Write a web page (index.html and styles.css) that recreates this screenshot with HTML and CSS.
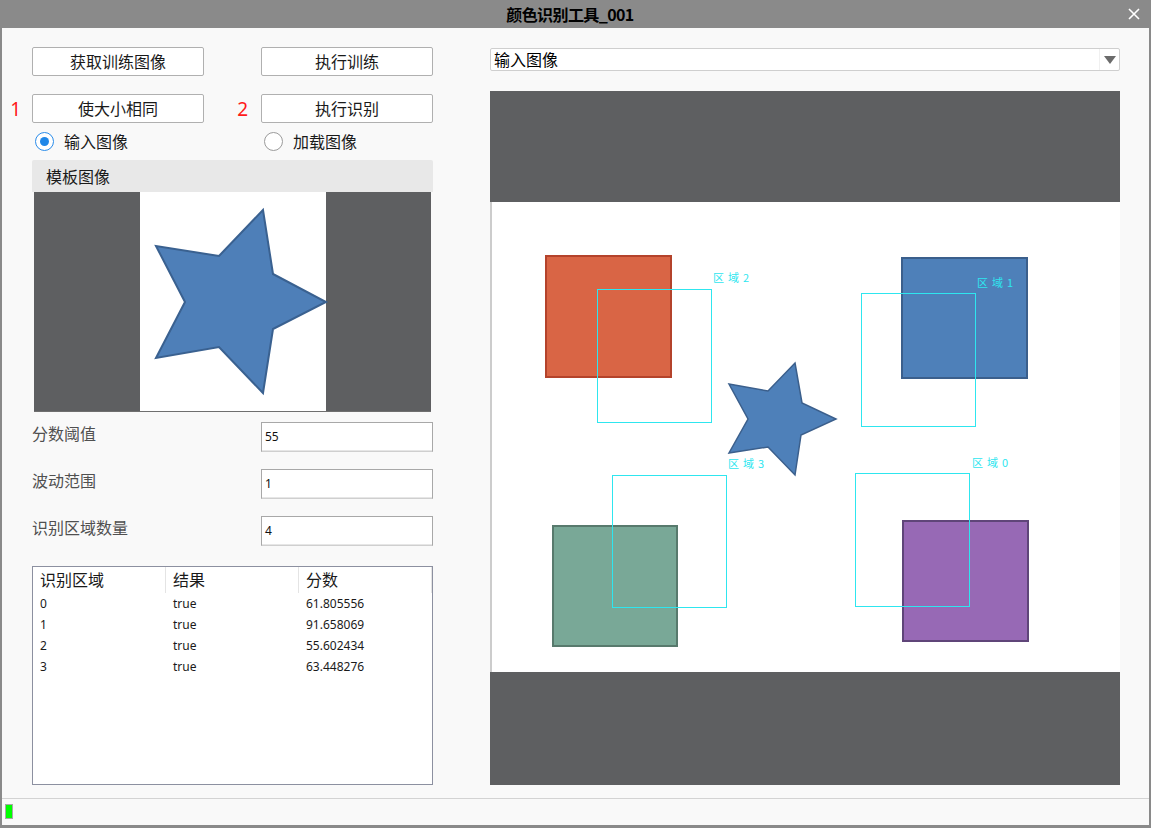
FILE: index.html
```html
<!DOCTYPE html>
<html lang="zh-CN">
<head>
<meta charset="utf-8">
<title>颜色识别工具_001</title>
<link rel="stylesheet" href="styles.css">
</head>
<body>
<div class="window">
  <div class="titlebar">
    <div class="title-spacer"></div>
    <div class="title">颜色识别工具_001</div>
    <div class="title-spacer close-wrap">
      <svg class="close" width="12" height="12" viewBox="0 0 12 12"><path d="M1 1L11 11M11 1L1 11" stroke="#fff" stroke-width="1.6"/></svg>
    </div>
  </div>
  <div class="client">
    <div class="main">
      <div class="left">
        <div class="btn-grid">
          <div></div>
          <button class="btn">获取训练图像</button>
          <div></div>
          <button class="btn">执行训练</button>
          <div class="num num1">1</div>
          <button class="btn">使大小相同</button>
          <div class="num num2">2</div>
          <button class="btn">执行识别</button>
        </div>
        <div class="radio-row">
          <div></div>
          <label class="radio"><span class="circle on"></span><span>输入图像</span></label>
          <div></div>
          <label class="radio"><span class="circle"></span><span>加载图像</span></label>
        </div>
        <div class="template">
          <div class="template-head">模板图像</div>
          <svg class="template-img" width="397" height="220" viewBox="0 0 397 220">
            <rect x="0" y="0" width="397" height="220" fill="#5e5f61"/>
            <rect x="106" y="0" width="186" height="219" fill="#ffffff"/>
            <polygon points="229,18 239,82 292,110 239,137 229,201 185,155 122,166 151,110 122,54 185,64" fill="#4e7fb8" stroke="#3a6190" stroke-width="2" stroke-linejoin="miter"/>
            <rect x="0" y="219" width="397" height="1" fill="#6f6f6f"/>
          </svg>
        </div>
        <div class="form">
          <div></div><div class="flabel">分数阈值</div><div class="input">55</div>
          <div></div><div class="flabel">波动范围</div><div class="input">1</div>
          <div></div><div class="flabel">识别区域数量</div><div class="input">4</div>
        </div>
        <div class="table">
          <div class="thead">
            <div class="th">识别区域</div>
            <div class="th">结果</div>
            <div class="th">分数</div>
          </div>
          <div class="tr"><div>0</div><div>true</div><div>61.805556</div></div>
          <div class="tr"><div>1</div><div>true</div><div>91.658069</div></div>
          <div class="tr"><div>2</div><div>true</div><div>55.602434</div></div>
          <div class="tr"><div>3</div><div>true</div><div>63.448276</div></div>
        </div>
      </div>
      <div class="right">
        <div class="combo">
          <span class="combo-text">输入图像</span>
          <span class="combo-arrow"><svg width="12" height="8" viewBox="0 0 12 8"><polygon points="0,0 12,0 6,8" fill="#6b6b6b"/></svg></span>
        </div>
        <svg class="view" width="630" height="694" viewBox="0 0 630 694">
          <rect x="0" y="0" width="630" height="694" fill="#5e5f61"/>
          <rect x="0" y="111" width="630" height="470" fill="#ffffff"/>
          <rect x="0.5" y="111" width="1" height="470" fill="#9a9a9a"/>
          <rect x="56" y="165" width="125" height="121" fill="#d96545" stroke="#b4432b" stroke-width="2"/>
          <rect x="412" y="167" width="125" height="120" fill="#4e80b9" stroke="#3b5f8c" stroke-width="2"/>
          <rect x="63" y="435" width="124" height="120" fill="#79a897" stroke="#587a6d" stroke-width="2"/>
          <rect x="413" y="430" width="125" height="120" fill="#9769b5" stroke="#5f4579" stroke-width="2"/>
          <polygon points="305,272 312,312 346,328 311,344 305,384 278,356 239,362 258,328 239,293 278,300" fill="#4e80b9" stroke="#3b5f8c" stroke-width="1.5"/>
          <g fill="none" stroke="#2ee6ef" stroke-width="1">
            <rect x="107.5" y="198.5" width="114" height="133"/>
            <rect x="371.5" y="202.5" width="114" height="133"/>
            <rect x="122.5" y="384.5" width="114" height="132"/>
            <rect x="365.5" y="382.5" width="114" height="133"/>
          </g>
          <g class="vlabel" fill="#2ee6ef">
            <text x="223" y="191">区域2</text>
            <text x="487" y="196">区域1</text>
            <text x="238" y="377">区域3</text>
            <text x="482" y="376">区域0</text>
          </g>
        </svg>
      </div>
    </div>
    <div class="status">
      <span class="led"></span>
    </div>
  </div>
</div>
</body>
</html>
```

FILE: styles.css
```css
html, body {
  margin: 0;
  padding: 0;
}
body {
  background: #8a8a8a;
  font-family: "Noto Sans CJK SC", "Noto Sans", sans-serif;
}
.window {
  width: 1151px;
  height: 828px;
  display: flex;
  flex-direction: column;
  background: #8a8a8a;
}
.titlebar {
  height: 28px;
  display: flex;
  align-items: center;
}
.title-spacer {
  flex: 1;
}
.title {
  font-size: 16px;
  font-weight: bold;
  color: #000;
  letter-spacing: -0.6px;
  line-height: 28px;
}
.close-wrap {
  display: flex;
  justify-content: flex-end;
  padding-right: 11px;
}
.close {
  display: block;
}
.client {
  flex: 1;
  margin: 0 2px 3px 2px;
  background: #f9f9f9;
  display: flex;
  flex-direction: column;
}
.main {
  flex: 1;
  display: flex;
}
.left {
  width: 431px;
  padding-top: 19px;
  display: flex;
  flex-direction: column;
}
.btn-grid {
  display: grid;
  grid-template-columns: 30px 172px 57px 172px;
  grid-template-rows: 29px 29px;
  row-gap: 18px;
}
.btn {
  margin: 0;
  padding: 0;
  background: #ffffff;
  border: 1px solid #b0b0b0;
  border-radius: 2px;
  font-family: "Noto Sans CJK SC", sans-serif;
  font-size: 16px;
  color: #1a1a1a;
  line-height: 25px;
}
.num {
  color: #ff1a1a;
  font-family: "Noto Sans", "Open Sans", sans-serif;
  font-size: 19px;
  display: flex;
  align-items: center;
  justify-content: flex-end;
}
.num1 {
  padding-right: 11px;
}
.num2 {
  padding-right: 13px;
}
.radio-row {
  margin-top: 6px;
  height: 23px;
  display: grid;
  grid-template-columns: 30px 172px 57px 172px;
}
.radio {
  display: flex;
  align-items: center;
  gap: 10px;
  padding-left: 3px;
  font-size: 16px;
  color: #1a1a1a;
}
.circle {
  width: 17px;
  height: 17px;
  border: 1.5px solid #9b9b9b;
  border-radius: 50%;
  background: #fff;
  display: flex;
  align-items: center;
  justify-content: center;
  flex: none;
}
.circle.on {
  border-color: #2a8cea;
}
.circle.on::after {
  content: "";
  width: 9px;
  height: 9px;
  border-radius: 50%;
  background: #1f87e8;
}
.template {
  margin-top: 8px;
  margin-left: 30px;
  width: 401px;
  display: flex;
  flex-direction: column;
}
.template-head {
  height: 32px;
  background: #e8e8e8;
  font-size: 16px;
  color: #1a1a1a;
  padding-left: 14px;
  line-height: 32px;
  border-radius: 2px 2px 0 0;
}
.template-img {
  display: block;
  margin: 0 2px;
}
.form {
  margin-top: 10px;
  display: grid;
  grid-template-columns: 30px 229px 172px;
  grid-auto-rows: 30px;
  row-gap: 17px;
}
.flabel {
  font-size: 16px;
  color: #505050;
  display: flex;
  align-items: center;
  margin-top: -8px;
}
.input {
  background: #fff;
  border: 1px solid #a8a8a8;
  border-bottom-color: #cfcfcf;
  box-shadow: inset 0 -1px 0 #e6e6e6;
  font-family: "Noto Sans", "Open Sans", sans-serif;
  font-size: 12px;
  color: #111;
  padding-left: 3px;
  line-height: 28px;
}
.table {
  margin-top: 20px;
  margin-left: 30px;
  width: 399px;
  height: 217px;
  background: #fff;
  border: 1px solid #8c90a0;
}
.thead {
  display: grid;
  grid-template-columns: 133px 133px 133px;
  height: 26px;
}
.th {
  font-size: 16px;
  color: #1a1a1a;
  padding-left: 7px;
  line-height: 24px;
  border-right: 1px solid #e4e4e4;
}
.tr {
  display: grid;
  grid-template-columns: 133px 133px 133px;
  height: 21px;
  font-family: "Noto Sans", "Open Sans", sans-serif;
  font-size: 12px;
  color: #1a1a1a;
  line-height: 21px;
}
.tr div {
  padding-left: 7px;
}
.right {
  margin-left: 57px;
  width: 630px;
  padding-top: 20px;
  display: flex;
  flex-direction: column;
}
.combo {
  height: 21px;
  border: 1px solid #cfcfcf;
  border-radius: 2px;
  background: #fff;
  display: flex;
  align-items: center;
}
.combo-text {
  flex: 1;
  padding-left: 3px;
  font-size: 16px;
  color: #000;
  line-height: 21px;
}
.combo-arrow {
  width: 19px;
  height: 21px;
  border-left: 1px solid #f0f0f0;
  display: flex;
  align-items: center;
  justify-content: center;
}
.combo-arrow svg {
  display: block;
}
.view {
  display: block;
  margin-top: 20px;
}
.vlabel text {
  font-family: "Noto Sans CJK SC", sans-serif;
  font-size: 11px;
  letter-spacing: 4px;
}
.status {
  height: 26px;
  border-top: 1px solid #d3d3d3;
  display: flex;
  align-items: center;
  padding-left: 3px;
}
.led {
  width: 6px;
  height: 13px;
  background: #00ff00;
  border: 1px solid #a8a8a8;
  flex: none;
  margin-top: -2px;
}
```
